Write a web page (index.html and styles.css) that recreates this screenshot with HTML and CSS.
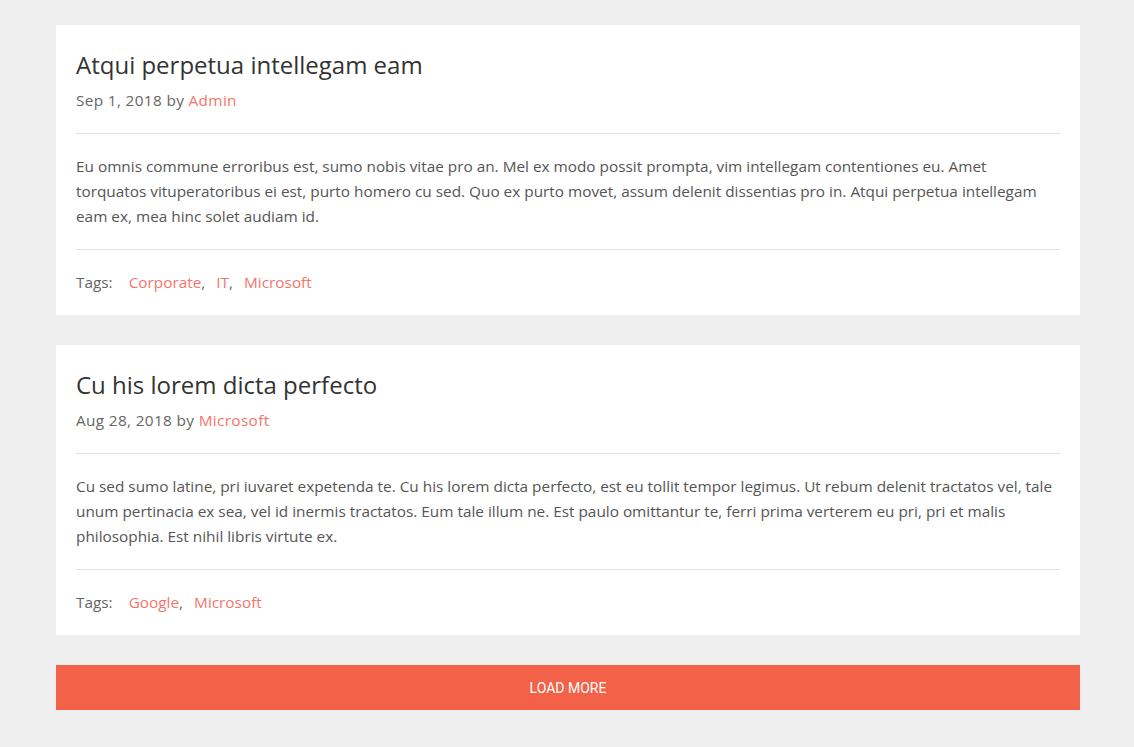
FILE: index.html
```html
<!DOCTYPE html>
<html lang="en">
<head>
    <meta charset="UTF-8">
    <meta name="viewport" content="width=device-width, initial-scale=1.0">
    <title>Blog</title>
    <link rel="stylesheet" href="styles.css">
</head>
<body>
    <main class="posts">
        <article class="post">
            <header class="post-header">
                <h2>Atqui perpetua intellegam eam</h2>
                <p class="meta">Sep 1, 2018 by <a href="#">Admin</a></p>
            </header>
            <div class="post-body">
                <p>Eu omnis commune erroribus est, sumo nobis vitae pro an. Mel ex modo possit prompta, vim intellegam contentiones eu. Amet torquatos vituperatoribus ei est, purto homero cu sed. Quo ex purto movet, assum delenit dissentias pro in. Atqui perpetua intellegam eam ex, mea hinc solet audiam id.</p>
            </div>
            <div class="tags">
                <span class="tags-label">Tags:</span>
                <span class="tag"><a href="#">Corporate</a>,</span>
                <span class="tag"><a href="#">IT</a>,</span>
                <span class="tag"><a href="#">Microsoft</a></span>
            </div>
        </article>
        <article class="post">
            <header class="post-header">
                <h2>Cu his lorem dicta perfecto</h2>
                <p class="meta">Aug 28, 2018 by <a href="#">Microsoft</a></p>
            </header>
            <div class="post-body">
                <p>Cu sed sumo latine, pri iuvaret expetenda te. Cu his lorem dicta perfecto, est eu tollit tempor legimus. Ut rebum delenit tractatos vel, tale unum pertinacia ex sea, vel id inermis tractatos. Eum tale illum ne. Est paulo omittantur te, ferri prima verterem eu pri, pri et malis philosophia. Est nihil libris virtute ex.</p>
            </div>
            <div class="tags">
                <span class="tags-label">Tags:</span>
                <span class="tag"><a href="#">Google</a>,</span>
                <span class="tag"><a href="#">Microsoft</a></span>
            </div>
        </article>
        <button class="load-more">LOAD MORE</button>
    </main>
</body>
</html>
```
FILE: styles.css
```css
body {
    margin: 0;
    background-color: #efefef;
    font-family: "Open Sans", "Noto Sans", sans-serif;
    color: #555;
}
.posts {
    width: 1024px;
    margin: 0 54px 0 56px;
    padding: 25px 0 37px;
}
.post {
    background-color: white;
    padding: 25px 20px 20px;
    margin-bottom: 30px;
}
.post a {
    color: #f4766b;
    text-decoration: none;
}
.post-header {
    padding-bottom: 20px;
    border-bottom: 1px solid #e3e3e3;
}
.post-header h2 {
    margin: 0 0 9px;
    font-size: 24px;
    font-weight: 400;
    line-height: 29px;
    color: #333;
}
.meta {
    margin: 0;
    font-size: 15.35px;
    line-height: 25px;
    letter-spacing: 0.35px;
    color: #666;
}
.post-body {
    padding: 20px 0;
    border-bottom: 1px solid #e3e3e3;
}
.post-body p {
    max-width: 979px;
    margin: 0;
    font-size: 15.35px;
    line-height: 25px;
}
.tags {
    padding-top: 20px;
    font-size: 15.35px;
    line-height: 25px;
    color: #666;
}
.tags-label {
    margin-right: 5px;
}
.tag {
    margin-left: 7px;
}
.load-more {
    display: block;
    width: 100%;
    height: 45px;
    border: none;
    background-color: #f26148;
    color: white;
    font-family: Roboto, sans-serif;
    font-size: 14px;
    cursor: pointer;
}
```
